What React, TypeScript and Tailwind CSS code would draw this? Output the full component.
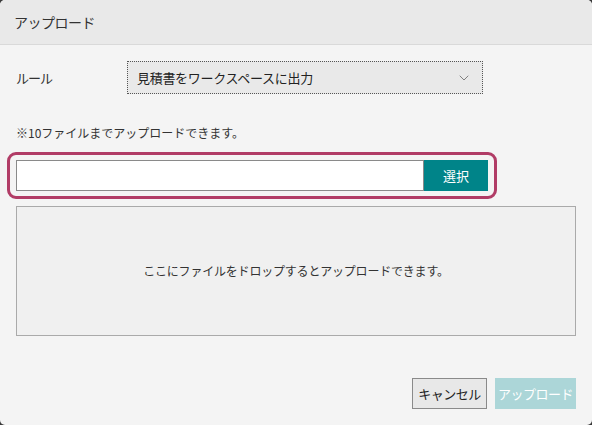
import { ChevronDown } from 'lucide-react'

const font = { fontFamily: '"Noto Sans CJK JP", "Noto Sans", sans-serif' }

export default function App() {
  return (
    <div className="w-[592px] h-[425px] bg-[#3a3a3a]" style={font}>
      <div className="w-full h-full rounded-[5px] overflow-hidden bg-[#f4f4f4] flex flex-col">
        <header className="h-[45px] shrink-0 bg-[#e9e9e9] border-b border-[#d9d9d9] flex items-center px-[14px]">
          <h1 className="text-[14px] text-[#333] tracking-[-0.5px]">アップロード</h1>
        </header>

        <div className="flex-1 flex flex-col px-4">
          <div className="flex items-center mt-[16px] h-[33px]">
            <span className="w-[111px] text-[13px] text-[#333] tracking-[-1px]">ルール</span>
            <div className="w-[356px] h-[33px] border border-dotted border-[#555] bg-[#e9e9e9] flex items-center justify-between pl-[9px] pr-[10px]">
              <span className="text-[13px] text-[#222] tracking-[-0.3px]">見積書をワークスペースに出力</span>
              <ChevronDown size={16} strokeWidth={1.2} className="text-[#666]" />
            </div>
          </div>

          <p className="mt-[31px] text-[12px] text-[#333] leading-[16px]">※10ファイルまでアップロードできます。</p>

          <div className="-mx-[9px] mt-[11px] w-[490px] border-[3px] border-[#b13c66] rounded-[9px] px-[6px] py-[5px]">
            <div className="flex h-[31px]">
              <input className="flex-1 h-full bg-white border border-[#8a8a8a] outline-none" />
              <button className="w-[64px] h-full bg-[#008489] text-white text-[13px]">選択</button>
            </div>
          </div>

          <div className="mt-[7px] w-[560px] h-[130px] bg-[#f0f0f0] border border-[#aaa] flex items-center justify-center">
            <span className="text-[12px] text-[#333] tracking-[-0.2px]">ここにファイルをドロップするとアップロードできます。</span>
          </div>

          <div className="flex justify-end gap-[8px] mt-[42px] w-[560px]">
            <button className="w-[75px] h-[31px] bg-[#e8e8e8] border border-[#8a8a8a] text-[13px] text-[#222] tracking-[-0.5px]">キャンセル</button>
            <button className="w-[81px] h-[31px] bg-[#acd6d8] text-[13px] text-white tracking-[-0.5px]">アップロード</button>
          </div>
        </div>
      </div>
    </div>
  )
}
